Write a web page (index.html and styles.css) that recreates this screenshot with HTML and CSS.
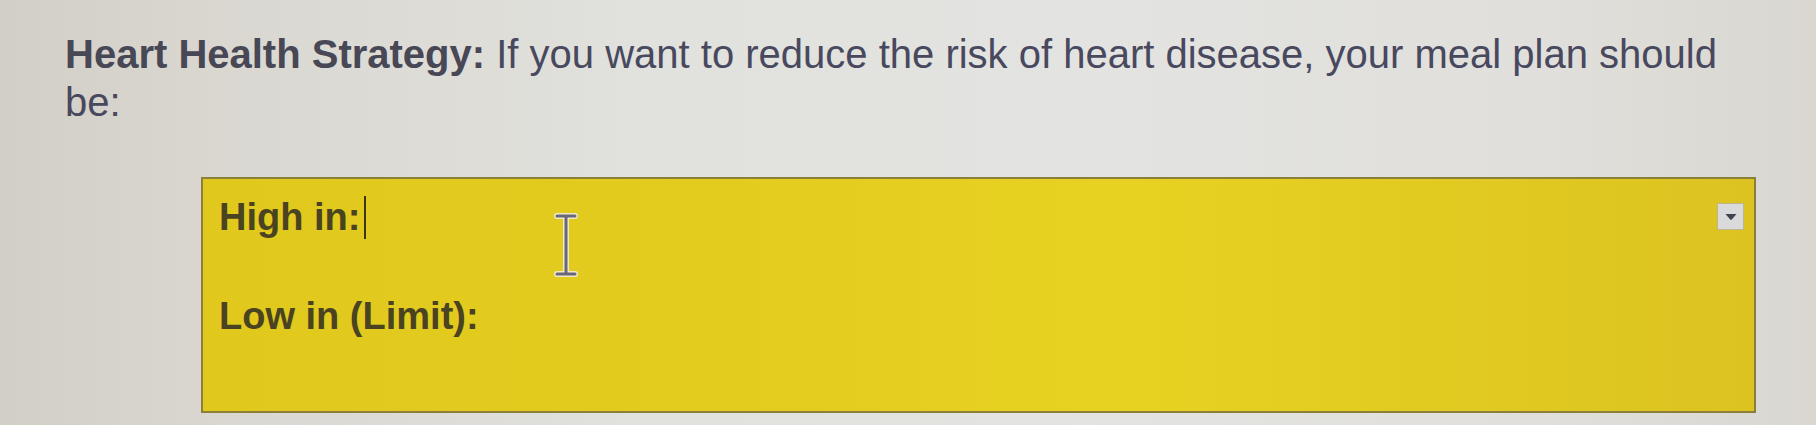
FILE: index.html
```html
<!DOCTYPE html>
<html lang="en">
<head>
<meta charset="utf-8">
<title>Heart Health Strategy</title>
<link rel="stylesheet" href="styles.css">
</head>
<body>
<div class="page">
  <p class="question"><strong>Heart Health Strategy:</strong> If you want to reduce the risk of heart disease, your meal plan should be:</p>
  <div class="answer">
    <div class="row">High in:<span class="caret"></span></div>
    <div class="row">Low in (Limit):</div>
    <button class="drop" type="button" aria-label="Open menu">
      <svg width="14" height="8" viewBox="0 0 14 8"><path d="M1.5 1 L12.5 1 L7.8 6.6 Q7 7.4 6.2 6.6 Z" fill="#414150"/></svg>
    </button>
    <svg class="ibeam" width="30" height="66" viewBox="0 0 30 66">
      <path d="M6 4 L24 4 M15 4 L15 62 M6 62 L24 62" fill="none" stroke="#ece9cc" stroke-width="6" stroke-linecap="round"/>
      <path d="M6 4 L24 4 M15 4 L15 62 M6 62 L24 62" fill="none" stroke="#6a6878" stroke-width="3" stroke-linecap="round"/>
    </svg>
  </div>
</div>
</body>
</html>
```

FILE: styles.css
```css
html, body {
  margin: 0;
  padding: 0;
}
body {
  width: 1816px;
  height: 425px;
  overflow: hidden;
  background: linear-gradient(90deg, #d2cfc7 0%, #d9d7d0 12%, #e1e1dd 35%, #e3e3e1 60%, #e0dfdb 85%, #d9d7d0 100%);
  font-family: "Liberation Sans", Arial, sans-serif;
}
.page {
  padding: 30px 0 0 0;
}
.question {
  margin: 0 0 51px 65px;
  width: 1700px;
  font-size: 40px;
  line-height: 48px;
  color: #48485e;
}
.question strong {
  font-weight: bold;
  color: #474755;
}
.answer {
  position: relative;
  box-sizing: border-box;
  margin-left: 201px;
  width: 1555px;
  height: 236px;
  border: 2px solid #8c7f3a;
  background: linear-gradient(90deg, #e0c81d 0%, #e5cd1f 40%, #e7d221 60%, #dcc321 100%);
  padding: 15px 0 0 16px;
  display: flex;
  flex-direction: column;
  gap: 53px;
}
.row {
  font-size: 38px;
  line-height: 46px;
  font-weight: bold;
  color: #4a4321;
  display: flex;
  align-items: center;
}
.caret {
  display: inline-block;
  width: 2px;
  height: 43px;
  margin-left: 4px;
  background: #3a3420;
}
.drop {
  position: absolute;
  top: 24px;
  right: 10px;
  width: 27px;
  height: 27px;
  margin: 0;
  padding: 0;
  border: 1px solid #bdb78e;
  background: #dadadc;
  display: flex;
  align-items: center;
  justify-content: center;
}
.ibeam {
  position: absolute;
  left: 348px;
  top: 33px;
}
```
